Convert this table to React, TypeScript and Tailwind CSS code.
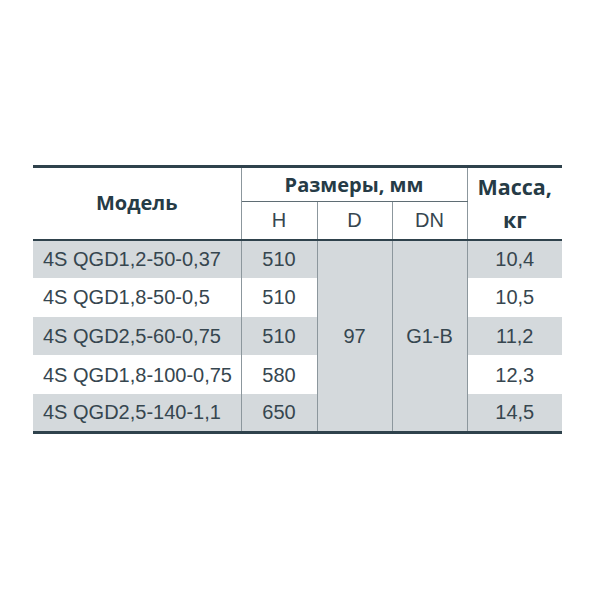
const rows = [
	{ model: "4S QGD1,2-50-0,37", h: "510", mass: "10,4" },
	{ model: "4S QGD1,8-50-0,5", h: "510", mass: "10,5" },
	{ model: "4S QGD2,5-60-0,75", h: "510", mass: "11,2" },
	{ model: "4S QGD1,8-100-0,75", h: "580", mass: "12,3" },
	{ model: "4S QGD2,5-140-1,1", h: "650", mass: "14,5" },
];

const head = "font-['Open_Sans',sans-serif] font-bold text-[#263b46]";
const cell = "font-['Liberation_Sans',Arial,sans-serif] text-[20px] text-[#36464f]";

export default function App() {
	return (
		<div className="w-[600px] h-[600px] bg-white pt-[165px] pl-[33px]">
			<table className="w-[529px] border-collapse table-fixed border-t-[3px] border-b-[3px] border-[#2f424c]">
				<colgroup>
					<col className="w-[208px]" />
					<col className="w-[76px]" />
					<col className="w-[75px]" />
					<col className="w-[75px]" />
					<col className="w-[95px]" />
				</colgroup>
				<thead>
					<tr>
						<th rowSpan={2} className={`${head} text-[20px] border-b-2 border-b-[#2f424c] border-r border-r-[#8c979d]`}>
							Модель
						</th>
						<th colSpan={3} className={`${head} text-[20px] h-[35px] border-b border-b-[#5f6d74]`}>
							Размеры, мм
						</th>
						<th rowSpan={2} className={`${head} text-[21.5px] leading-[33px] border-b-2 border-b-[#2f424c] border-l border-l-[#8c979d]`}>
							Масса,
							<br />
							кг
						</th>
					</tr>
					<tr>
						<th className={`${cell} h-[38px] font-normal border-b-2 border-b-[#2f424c] border-r border-r-[#8c979d]`}>H</th>
						<th className={`${cell} font-normal border-b-2 border-b-[#2f424c] border-r border-r-[#8c979d]`}>D</th>
						<th className={`${cell} font-normal border-b-2 border-b-[#2f424c]`}>DN</th>
					</tr>
				</thead>
				<tbody>
					{rows.map((r, i) => {
						const bg = i % 2 === 0 ? "bg-[#d4d9dc]" : "bg-white";
						return (
							<tr key={r.model}>
								<td className={`${cell} ${bg} h-[38.6px] pl-[10px] border-r border-r-[#8c979d]`}>{r.model}</td>
								<td className={`${cell} ${bg} text-center border-r border-r-[#8c979d]`}>{r.h}</td>
								{i === 0 && (
									<>
										<td rowSpan={5} className={`${cell} bg-[#d4d9dc] text-center border-r border-r-[#8c979d]`}>97</td>
										<td rowSpan={5} className={`${cell} bg-[#d4d9dc] text-center border-r border-r-[#8c979d]`}>G1-B</td>
									</>
								)}
								<td className={`${cell} ${bg} text-center`}>{r.mass}</td>
							</tr>
						);
					})}
				</tbody>
			</table>
		</div>
	);
}
